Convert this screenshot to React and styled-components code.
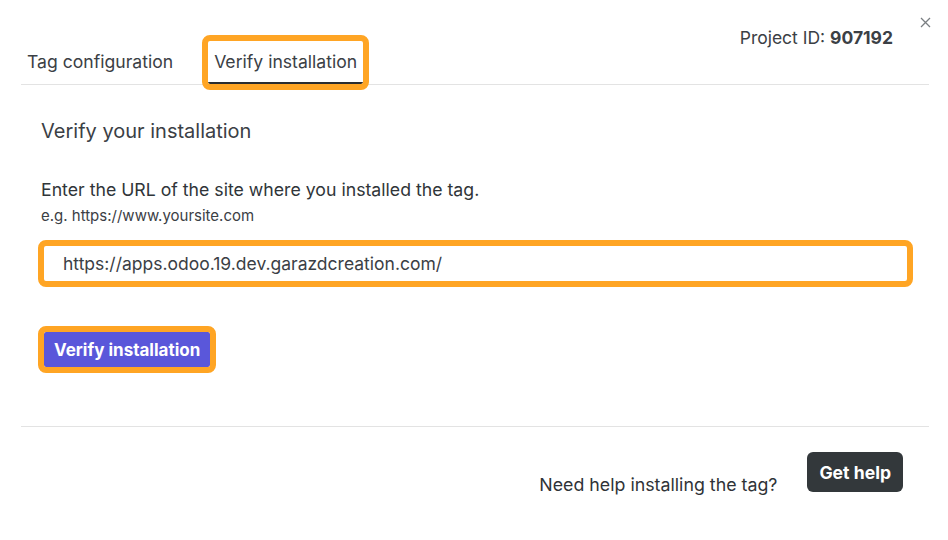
import React from "react";
import styled, { createGlobalStyle, css } from "styled-components";

const Global = createGlobalStyle`
  html, body { margin: 0; padding: 0; background: #fff; }
  body { font-family: Inter, "Noto Sans", sans-serif; color: #3b4045; }
`;

const ORANGE = "#ffa524";

const highlight = css`
  outline: 6px solid ${ORANGE};
  outline-offset: 0;
`;

const Modal = styled.div`
  position: relative;
  width: 948px;
  height: 540px;
  box-sizing: border-box;
  padding: 0 19px 0 21px;
  background: #fff;
`;

const Close = styled.button`
  position: absolute;
  top: 14px;
  right: 15px;
  width: 16px;
  height: 16px;
  padding: 0;
  border: none;
  background: none;
  display: flex;
  align-items: center;
  justify-content: center;
  cursor: pointer;
`;

const Header = styled.div`
  display: flex;
  justify-content: space-between;
  align-items: flex-start;
  height: 84px;
  border-bottom: 1px solid #e3e3e3;
`;

const Tabs = styled.div`
  display: flex;
  gap: 29px;
  align-self: flex-end;
`;

const Tab = styled.div`
  padding: 9px 6px 8px;
  font-size: 17.6px;
  line-height: 24px;
  color: #3b4045;
  border-bottom: 2px solid ${(p) => (p.$active ? "#2a2d30" : "transparent")};
  border-radius: 2px;
  ${(p) => p.$highlight && highlight}
`;

const ProjectId = styled.div`
  margin-top: 26px;
  margin-right: 36px;
  font-size: 17.5px;
  line-height: 24px;
  color: #3b4045;
  b { font-weight: 700; }
`;

const Body = styled.div`
  display: flex;
  flex-direction: column;
  align-items: flex-start;
  padding: 34px 20px 59px;
  border-bottom: 1px solid #e3e3e3;
`;

const Title = styled.h2`
  margin: 0;
  font-size: 20px;
  line-height: 24px;
  font-weight: 400;
  color: #3b4045;
`;

const Label = styled.div`
  margin-top: 36px;
  font-size: 17.7px;
  line-height: 22px;
  font-weight: 400;
  color: #303539;
`;

const Hint = styled.div`
  margin-top: 6px;
  font-size: 15px;
  line-height: 18px;
  color: #3b4045;
`;

const UrlInput = styled.input`
  box-sizing: border-box;
  margin: 21px 2px 0 3px;
  width: calc(100% - 5px);
  height: 35px;
  padding: 0 19px;
  border: none;
  border-radius: 2px;
  font-family: inherit;
  font-size: 17.5px;
  color: #3b4045;
  background: #fff;
  ${highlight}
`;

const PrimaryButton = styled.button`
  margin: 51px 0 0 3px;
  height: 35px;
  padding: 0 10px;
  border: none;
  border-radius: 2px;
  background: #5a57da;
  color: #fff;
  font-family: inherit;
  font-size: 17px;
  font-weight: 700;
  cursor: pointer;
  ${highlight}
`;

const Footer = styled.div`
  display: flex;
  justify-content: flex-end;
  align-items: flex-start;
  gap: 30px;
  padding-right: 26px;
`;

const HelpText = styled.div`
  margin-top: 46px;
  font-size: 17.8px;
  line-height: 24px;
  color: #2f3337;
`;

const DarkButton = styled.button`
  margin-top: 25px;
  height: 40px;
  padding: 0 12px;
  border: none;
  border-radius: 6px;
  background: #33383b;
  color: #fff;
  font-family: inherit;
  font-size: 17.6px;
  font-weight: 700;
  cursor: pointer;
`;

export default function App() {
  return (
    <>
      <Global />
      <Modal>
        <Close aria-label="Close">
          <svg width="11" height="11" viewBox="0 0 11 11">
            <path d="M1 1L10 10M10 1L1 10" stroke="#7a7e82" strokeWidth="1.3" />
          </svg>
        </Close>
        <Header>
          <Tabs>
            <Tab>Tag configuration</Tab>
            <Tab $active $highlight>Verify installation</Tab>
          </Tabs>
          <ProjectId>
            Project ID: <b>907192</b>
          </ProjectId>
        </Header>
        <Body>
          <Title>Verify your installation</Title>
          <Label>Enter the URL of the site where you installed the tag.</Label>
          <Hint>e.g. https://www.yoursite.com</Hint>
          <UrlInput readOnly defaultValue="https://apps.odoo.19.dev.garazdcreation.com/" />
          <PrimaryButton>Verify installation</PrimaryButton>
        </Body>
        <Footer>
          <HelpText>Need help installing the tag?</HelpText>
          <DarkButton>Get help</DarkButton>
        </Footer>
      </Modal>
    </>
  );
}
